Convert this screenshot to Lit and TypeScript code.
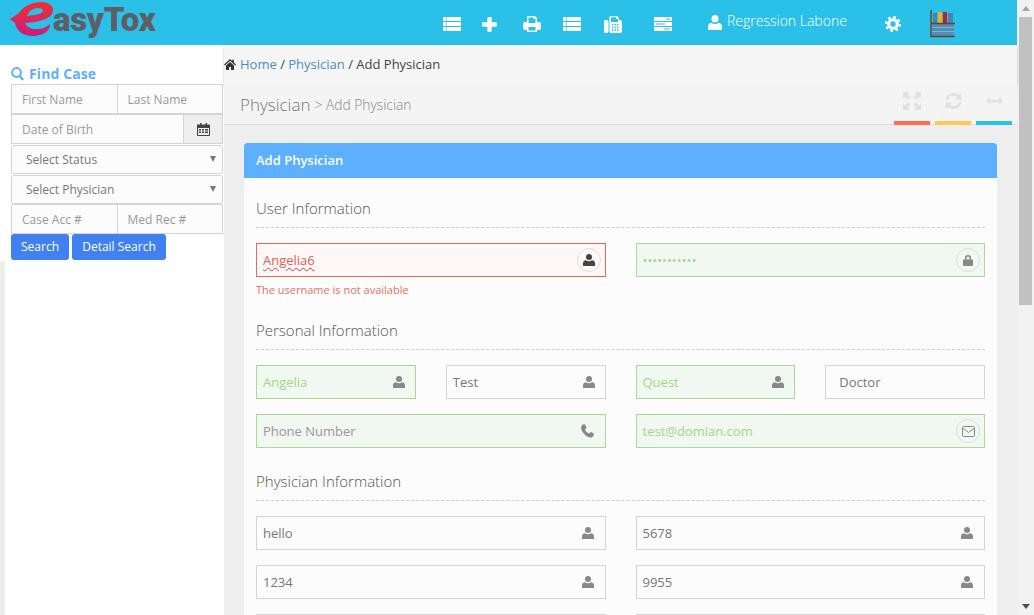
import { LitElement, html, css, svg } from 'lit';
import { customElement } from 'lit/decorators.js';

const icon = (w: number, h: number, body: unknown, cls = '') =>
  html`<svg class=${cls} width=${w} height=${h} viewBox="0 0 ${w} ${h}" fill="currentColor">${body}</svg>`;

const rows = svg`
  <path d="M0 0h3.400v4H0zM4 0h14v4H4zM0 5h3.400v4H0zM4 5h14v4H4zM0 10h3.400v4H0zM4 10h14v4H4z"/>`;
const listIcon = () => icon(18, 14, rows);
const plusIcon = () => icon(15, 15, svg`<path d="M5.300 1.200C5.300.5 5.800 0 6.500 0h2c.7 0 1.200.5 1.200 1.200v4.100h4.100c.7 0 1.200.5 1.200 1.200v2c0 .7-.5 1.200-1.200 1.200H9.700v4.100c0 .7-.5 1.200-1.200 1.200h-2c-.7 0-1.200-.5-1.200-1.200V9.700H1.200C.5 9.700 0 9.200 0 8.500v-2c0-.7.5-1.200 1.200-1.200h4.100z"/>`);
const printIcon = () => icon(18, 16, svg`
  <path fill-rule="evenodd" d="M4 0h8l2 2v4h2c1.100 0 2 .9 2 2v4c0 1-.9 2-2 2h-2v2H4v-2H2c-1.100 0-2-1-2-2V8c0-1.100.9-2 2-2h2zM5.500 1.500V7h7V3h-2V1.500zM5.500 11v3.500h7V11z"/>`);
const faxIcon = () => icon(18, 17, svg`
  <path fill-rule="evenodd" d="M0 5.500C0 4.500.8 4 1.500 4H3c.8 0 1.500.6 1.500 1.500v10c0 .9-.7 1.500-1.500 1.500H1.500C.7 17 0 16.400 0 15.500zM6 0h7l2 2v2h1c1.100 0 2 .9 2 2v9c0 1.100-.9 2-2 2H7c-1 0-1.500-.9-1.500-2V1c0-.5.2-1 .5-1zM7 1.200V6h7V3h-2V1.200zM8 8v1.500h1.500V8zm2.500 0v1.500H12V8zM13 8v1.500h1.500V8zM8 10.700v1.500h1.500v-1.500zm2.500 0v1.500H12v-1.500zm2.500 0v1.500h1.500v-1.500zM8 13.300v1.500h1.500v-1.500zm2.500 0v1.500H12v-1.500zm2.500 0v1.500h1.500v-1.500z"/>`);
const serverIcon = () => icon(18, 14, svg`
  <path fill-rule="evenodd" d="M0 0h18v4H0zM12 1.500v1h4v-1zM0 5h18v4H0zM2 6.500v1h9v-1zM0 10h18v4H0zM10 11.500v1h6v-1z"/>`);
const userIcon = (w = 12, h = 12) => html`<svg width=${w} height=${h} viewBox="0 0 12 12" fill="currentColor" preserveAspectRatio="none">
  <circle cx="6" cy="3" r="3"/><path d="M0 12V9.200C0 7.300 1.500 6.200 3 6.200c.8.600 1.800 1 3 1s2.200-.4 3-1c1.500 0 3 1.100 3 3V12z"/></svg>`;
const cogIcon = () => icon(16, 16, svg`
  <circle cx="8" cy="8" r="4.300" fill="none" stroke="currentColor" stroke-width="3.200"/>
  <circle cx="8" cy="8" r="6.900" fill="none" stroke="currentColor" stroke-width="2.200" stroke-dasharray="2.700 2.720"/>`);
const shelfIcon = () => html`<svg width="25" height="29" viewBox="0 0 25 29">
  <rect x="3" y="4" width="4" height="10" fill="#3f86b0"/>
  <rect x="8" y="3" width="4" height="11" fill="#f2b01e"/>
  <rect x="13" y="3" width="4" height="11" fill="#b3252b"/>
  <rect x="18" y="4" width="5" height="10" fill="#3f86b0"/>
  <rect x="2" y="15" width="22" height="12" fill="#4a90b8"/>
  <path d="M2 18.500h22M2 22.500h22" stroke="#7fb4d0" stroke-width="1"/>
  <path d="M1 1v26.500h24M1 14.500h24" stroke="#7a3b20" stroke-width="1.400" fill="none"/>
</svg>`;
const homeIcon = () => icon(12, 11, svg`<path d="M6 0l2.200 2V.8h1.600v2.700L12 5.600l-.8.800L6 1.700.8 6.400 0 5.600zM2 6.600L6 3l4 3.600V11H7V8H5v3H2z"/>`);
const searchIcon = () => html`<svg width="13" height="14" viewBox="0 0 13 14" fill="none" stroke="currentColor">
  <circle cx="5.500" cy="5.500" r="4.400" stroke-width="2"/><path d="M8.800 9l3.300 4" stroke-width="2.400"/></svg>`;
const calendarIcon = () => icon(13, 13, svg`
  <path fill-rule="evenodd" d="M1 1.500h2V0h1.500v1.500h4V0H10v1.500h2c.6 0 1 .4 1 1V12c0 .6-.4 1-1 1H1c-.6 0-1-.4-1-1V2.500c0-.6.4-1 1-1zM1 5v7h11V5zm1 1h2v1.500H2zm3 0h2v1.500H5zm3 0h3v1.500H8zM2 8.500h2V10H2zm3 0h2V10H5zm3 0h3V10H8z"/>`);
const lockIcon = () => icon(10, 11, svg`
  <path fill-rule="evenodd" d="M2 4.500V3a3 3 0 0 1 6 0v1.500h1c.5 0 1 .4 1 1V10c0 .6-.5 1-1 1H1c-.5 0-1-.4-1-1V5.500c0-.6.5-1 1-1zM3.500 3v1.500h3V3a1.500 1.500 0 0 0-3 0z"/>`);
const mailIcon = () => html`<svg width="13" height="11" viewBox="0 0 13 11" fill="none" stroke="currentColor">
  <rect x=".5" y=".5" width="12" height="10" rx="1.200"/><path d="M.8 2.200L6.500 6.500l5.700-4.300"/></svg>`;
const phoneIcon = () => icon(14, 14, svg`
  <path d="M3 .6L5 .2l1.600 3.600L5 5.400c.7 2 2 3.200 4 4l1.500-1.500L14 9.500l-.5 2c-.4 1.600-2 2.300-3.500 1.900C5.500 12.300 2 8.700 1.200 4.200 1 2.800 1.700 1.100 3 .6z"/>`);
const expandIcon = () => icon(18, 18, svg`
  <path d="M0 0h7L4.800 2.200 7.500 5 5 7.500 2.200 4.800 0 7zM18 0v7l-2.200-2.200L13 7.500 10.500 5l2.700-2.800L11 0zM0 18v-7l2.200 2.200L5 10.500 7.500 13l-2.700 2.800L7 18zM18 18h-7l2.200-2.200-2.700-2.800 2.500-2.500 2.800 2.700L18 11z"/>`);
const refreshIcon = () => html`<svg width="17" height="18" viewBox="0 0 17 18" fill="none" stroke="currentColor" stroke-width="2.600">
  <path d="M2 8a6.600 6.600 0 0 1 11.800-3"/><path d="M15 10a6.600 6.600 0 0 1-11.800 3"/>
  <path d="M16.500 1v6.500H10z" fill="currentColor" stroke="none"/><path d="M.5 17v-6.500H7z" fill="currentColor" stroke="none"/></svg>`;
const arrowsIcon = () => icon(17, 8, svg`<path d="M0 4l4-4v2.700h9V0l4 4-4 4V5.300H4V8z"/>`);

type Field = {
  text: string;
  state?: 'ok' | 'bad';
  hint?: boolean;
  icon?: unknown;
  ring?: boolean;
  dark?: boolean;
  wide?: boolean;
};

const navItems = [
  { gap: 443, icon: listIcon },
  { gap: 21, icon: plusIcon },
  { gap: 26, icon: printIcon },
  { gap: 22, icon: listIcon },
  { gap: 23, icon: faxIcon },
  { gap: 32, icon: serverIcon },
];

@customElement('app-root')
export class AppRoot extends LitElement {
  static styles = css`
    :host {
      display: flex;
      width: 1034px;
      height: 615px;
      overflow: hidden;
      font-family: "Open Sans", sans-serif;
      background: #eee;
    }
    .page { width: 1017px; display: flex; flex-direction: column; }

    /* header */
    .top { height: 45px; background: #2bc0e8; display: flex; align-items: center; color: #fff; flex: none; position: relative; }
    .logo { position: absolute; left: 10px; top: 0; display: flex; align-items: flex-start; }
    .logo-mark { flex: none; margin-top: 2px; }
    .logo-text { font-family: Roboto, sans-serif; font-size: 33px; font-weight: 900; color: #5f5e64; letter-spacing: -0.3px; margin-left: -1px; }
    .nav { display: flex; align-items: center; padding-top: 3px; }
    .nav-item { display: flex; }
    .who { display: flex; align-items: center; margin: -8px 0 0 36px; width: 139px; gap: 5px; font-size: 14px; font-weight: 300; flex: none; white-space: nowrap; }
    .who svg { flex: none; margin-top: 4px; }
    .cog { margin-left: 38px; display: flex; }
    .shelf { margin-left: 29px; display: flex; margin-top: -2px; }

    .below { flex: 1; display: flex; min-height: 0; }

    /* sidebar */
    .side { width: 224px; flex: none; background: #fff; display: flex; flex-direction: column; }
    .find { color: #5cb0ff; font-size: 14px; font-weight: 700; height: 39px; padding: 20px 0 1px 11px; box-sizing: border-box; line-height: 18px; display: flex; align-items: center; gap: 5px; letter-spacing: 0.1px; }
    .filters { margin: 0 1px 0 11px; display: flex; flex-direction: column; font-size: 12px; color: #999; }
    .frow { display: flex; height: 30px; }
    .fcell { flex: 1; border: 1px solid #d4d4d4; background: #fcfcfc; margin-left: -1px; padding-left: 10px; display: flex; align-items: center; box-sizing: border-box; }
    .fcell:first-child { margin-left: 0; }
    .fcell.cal { flex: none; width: 40px; padding: 0; justify-content: center; background: #eee; color: #444; }
    .fsel { height: 29px; margin-top: 1px; border: 1px solid #d4d4d4; border-radius: 3px; background: #fcfcfc; color: #777; display: flex; align-items: center; justify-content: space-between; padding: 0 6px 0 14px; box-sizing: border-box; }
    .caret { width: 0; height: 0; margin-bottom: 2px; border: 3.500px solid transparent; border-top: 6px solid #777; border-bottom: none; }
    .btns { display: flex; gap: 3px; }
    .btn { height: 26px; background: #4080f0; color: #fff; border-radius: 3px; font-size: 12px; padding-bottom: 1px; box-sizing: border-box; display: flex; align-items: center; justify-content: center; }
    .btn.s { width: 58px; }
    .btn.d { width: 94px; }
    .rest { flex: 1; border-left: 5px solid #eee; margin-top: 1px; }

    /* main */
    .main { flex: 1; min-width: 0; display: flex; flex-direction: column; }
    .crumbs { height: 40px; background: #f5f5f5; box-shadow: 0 1px 3px rgba(0, 0, 0, .2); display: flex; align-items: center; font-size: 13px; color: #444; gap: 4px; box-sizing: border-box; padding-bottom: 2px; flex: none; position: relative; }
    .crumbs a { color: #4a8fc0; }
    .crumbs svg { color: #333; }
    .title { height: 40px; background: #f4f4f4; border-bottom: 1px solid #ddd; display: flex; align-items: center; box-sizing: border-box; padding: 0 5px 0 16px; position: relative; flex: none; }
    .title b { font-weight: 300; font-size: 17px; color: #777; }
    .title i { font-style: normal; font-weight: 300; font-size: 13.800px; color: #888; margin-left: 4px; }
    .tools { margin-left: auto; display: flex; gap: 5px; align-self: stretch; }
    .tool { width: 36px; color: #e0e0e0; display: flex; justify-content: center; align-items: center; height: 40px; box-sizing: border-box; padding-bottom: 4px; border-bottom: 4px solid; }
    .tool.r { border-color: #ff6c50; }
    .tool.y { border-color: #ffc850; }
    .tool.b { border-color: #2bc0e8; }

    .card { margin: 18px 20px 0; background: #fcfcfc; border-radius: 3px 3px 0 0; flex: 1; min-height: 0; overflow: hidden; }
    .card-h { height: 35px; background: #5cb0ff; color: #fff; font-size: 13px; font-weight: 600; line-height: 35px; padding-left: 12px; border-radius: 3px 3px 0 0; }
    .card-b { padding: 19px 12px 0; }
    .legend { height: 31px; box-sizing: border-box; border-bottom: 1px dashed #ccc; font-size: 15px; font-weight: 300; color: #555; line-height: 22px; margin-bottom: 15px; }
    .sec { padding-bottom: 22px; }
    .grid { display: grid; grid-template-columns: repeat(2, 1fr); column-gap: 30px; row-gap: 15px; }
    .pair { display: grid; grid-template-columns: repeat(2, 1fr); column-gap: 30px; }
    .fld { height: 34px; box-sizing: border-box; border: 1px solid #d4d4d4; background: #fcfcfc; padding: 0 11px 0 6px; display: flex; align-items: center; justify-content: space-between; font-size: 13px; color: #777; }
    .pair .fld { padding-right: 10px; }
    .fld.wide { padding-left: 13px; }
    .fld.hint { color: #999; }
    .fld.ok { border-color: #a8db92; background: #f1f7f1; color: #a3d785; }
    .fld.ok.hint { color: #999; }
    .fld.bad { border-color: #e8695a; background: #fff8f8; color: #e0604f; }
    .val.wavy { text-decoration: underline wavy #d33; text-decoration-thickness: 1px; text-underline-offset: 2px; }
    .ico { color: #888; display: flex; }
    .ico.dark { color: #444; }
    .ring { width: 24px; height: 24px; margin-right: -7px; box-sizing: border-box; border: 1px solid #ddd; border-radius: 50%; display: flex; align-items: center; justify-content: center; }
    .err { font-size: 11px; line-height: 14px; margin-top: 6px; color: #e8705f; height: 14px; }

    /* page scrollbar */
    .bar { width: 17px; flex: none; background: #f1f1f1; display: flex; flex-direction: column; align-items: center; }
    .up { width: 0; height: 0; margin: 6px 0 6px; border: 4px solid transparent; border-bottom: 5px solid #a3a3a3; border-top: none; }
    .thumb { width: 13px; height: 288px; background: #c1c1c1; }
    .down { margin-top: auto; margin-bottom: 6px; width: 0; height: 0; border: 4px solid transparent; border-top: 5px solid #505050; border-bottom: none; }
  `;

  field(f: Field) {
    const cls = ['fld', f.state ?? '', f.hint ? 'hint' : '', f.wide ? 'wide' : ''].join(' ');
    const glyph = html`<span class="ico ${f.dark ? 'dark' : ''}">${f.icon ?? userIcon()}</span>`;
    return html`<div class=${cls}>
      <span class="val ${f.state === 'bad' ? 'wavy' : ''}">${f.text}</span>
      ${f.ring ? html`<span class="ring">${glyph}</span>` : glyph}
    </div>`;
  }

  render() {
    return html`
      <div class="page">
        <header class="top">
          <div class="logo">
            <svg class="logo-mark" width="44" height="34" viewBox="0 0 44 34">
              <defs>
                <linearGradient id="lg" x1="0" y1="0" x2="0" y2="1">
                  <stop offset="0" stop-color="#ee3030"/>
                  <stop offset="1" stop-color="#c51f80"/>
                </linearGradient>
              </defs>
              <path fill="url(#lg)" fill-rule="evenodd" d="M0 17L9 11C13 4 23 0 31 0c8 0 13 4 12 9-1 7-11 11-28 12 2 4 6 6 11 6 6 0 11-2 14-5 1 7-8 12-17 12C12 34 6 28 5 21zM17 14c9-1 15-2 16-5 0-2-2-3-5-3-5 0-9 3-11 8z"/>
            </svg>
            <span class="logo-text">asyTox</span>
          </div>
          <nav class="nav">
            ${navItems.map(
              (n) => html`<span class="nav-item" style="margin-left:${n.gap}px">${n.icon()}</span>`,
            )}
            <span class="who">${userIcon(14, 15)}<span>Regression Labone</span></span>
            <span class="cog">${cogIcon()}</span>
            <span class="shelf">${shelfIcon()}</span>
          </nav>
        </header>

        <div class="below">
          <aside class="side">
            <div class="find">${searchIcon()}<span>Find Case</span></div>
            <div class="filters">
              <div class="frow"><span class="fcell">First Name</span><span class="fcell">Last Name</span></div>
              <div class="frow"><span class="fcell">Date of Birth</span><span class="fcell cal">${calendarIcon()}</span></div>
              <div class="fsel"><span>Select Status</span><span class="caret"></span></div>
              <div class="fsel"><span>Select Physician</span><span class="caret"></span></div>
              <div class="frow"><span class="fcell">Case Acc #</span><span class="fcell">Med Rec #</span></div>
              <div class="btns"><span class="btn s">Search</span><span class="btn d">Detail Search</span></div>
            </div>
            <div class="rest"></div>
          </aside>

          <main class="main">
            <div class="crumbs">${homeIcon()}<span><a>Home</a> / <a>Physician</a> / Add Physician</span></div>
            <div class="title">
              <b>Physician</b><i>&gt; Add Physician</i>
              <div class="tools">
                <span class="tool r">${expandIcon()}</span>
                <span class="tool y">${refreshIcon()}</span>
                <span class="tool b">${arrowsIcon()}</span>
              </div>
            </div>
            <section class="card">
              <div class="card-h">Add Physician</div>
              <div class="card-b">
                <div class="legend">User Information</div>
                <div class="grid sec">
                  <div>
                    ${this.field({ text: 'Angelia6', state: 'bad', ring: true, dark: true })}
                    <div class="err">The username is not available</div>
                  </div>
                  ${this.field({ text: '•••••••••••', state: 'ok', ring: true, icon: lockIcon() })}
                </div>
                <div class="legend">Personal Information</div>
                <div class="grid sec">
                  <div class="pair">
                    ${this.field({ text: 'Angelia', state: 'ok' })}
                    ${this.field({ text: 'Test' })}
                  </div>
                  <div class="pair">
                    ${this.field({ text: 'Quest', state: 'ok' })}
                    ${this.field({ text: 'Doctor', icon: html``, wide: true })}
                  </div>
                  ${this.field({ text: 'Phone Number', state: 'ok', hint: true, icon: phoneIcon() })}
                  ${this.field({ text: 'test@domian.com', state: 'ok', ring: true, icon: mailIcon() })}
                </div>
                <div class="legend">Physician Information</div>
                <div class="grid">
                  ${this.field({ text: 'hello' })}
                  ${this.field({ text: '5678' })}
                  ${this.field({ text: '1234' })}
                  ${this.field({ text: '9955' })}
                  ${this.field({ text: '' })}
                  ${this.field({ text: '' })}
                </div>
              </div>
            </section>
          </main>
        </div>
      </div>
      <div class="bar">
        <span class="up"></span>
        <span class="thumb"></span>
        <span class="down"></span>
      </div>
    `;
  }
}
